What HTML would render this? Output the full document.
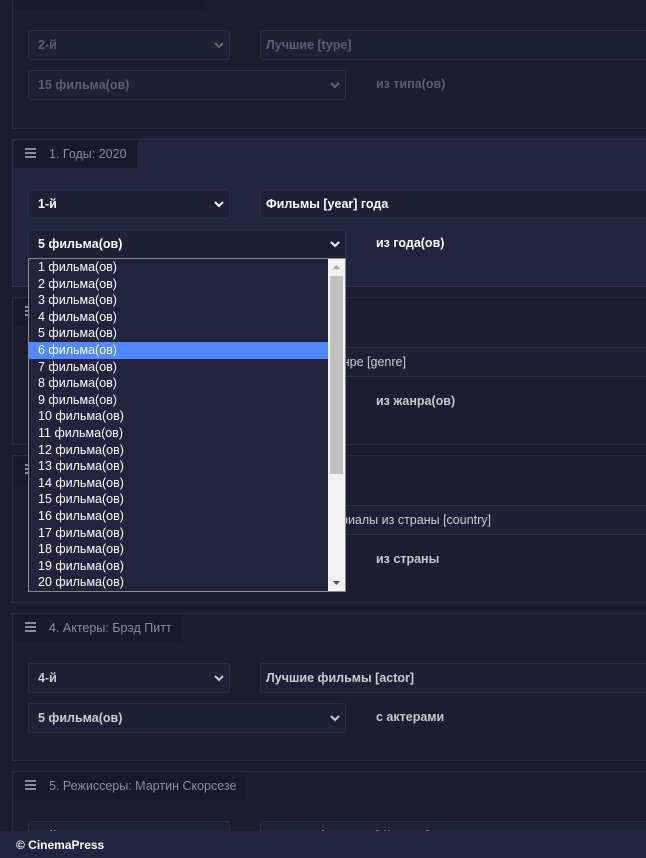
<!DOCTYPE html>
<html><head><meta charset="utf-8"><style>
*{box-sizing:border-box;margin:0;padding:0}
html{overflow:hidden;height:858px}
body{width:646px;height:858px;overflow:hidden;background:#1b1d2e;font-family:"Liberation Sans",Arial,sans-serif;font-size:12.5px;position:relative}
.p{position:absolute;left:12px;width:634px;height:148px;border:1px solid #2a2d42;border-right:none;background:#1c1e30;overflow:hidden}
.p.a{background:#21243c;border-color:#2d3050}
.tab{position:absolute;left:1px;top:1px;height:27px;background:#181a29;color:#8a8c98;padding:0 10px 0 11px;line-height:27px;font-size:12.5px}
.tab b{display:inline-block;width:11px;vertical-align:middle;margin-right:13px;position:relative;top:-2px}
.tab b i{display:block;height:2px;background:#8a8c98;margin:2px 0}
.s{position:absolute;height:30px;border:1px solid #2c2f48;border-radius:3px;background:#1e2036;color:#ccc;font-weight:bold;line-height:28px;padding-left:9px}
.t{padding-left:5px;width:400px!important}
.s svg{position:absolute;right:5px;top:10px}
.l{position:absolute;left:363px;top:96px;color:#c8c8cc;font-weight:bold}
.dim .s,.dim .l{color:#5c5e6c}
.dd{position:absolute;left:28px;top:258px;width:318px;height:334px;background:#21243c;border:1px solid #888;color:#fff;font-size:12.5px}
.dd .it{height:16.6px;line-height:16.6px;padding-left:9px;width:299px}
.dd .sel{background:#4f88ff}
.sb{position:absolute;right:0;top:0;width:17px;height:332px;background:#f1f1f1}
.th{position:absolute;left:2px;top:17px;width:13px;height:198px;background:#c1c1c1}
.ft{position:absolute;left:0;top:831px;width:646px;height:27px;background:#22253f;color:#fff;font-weight:bold;font-size:12px;line-height:28px;padding-left:16px}
</style></head><body>
<div class="p dim" style="top:0;height:129px;border-top:none"><div class="tab" style="top:0;height:10px;width:190px"></div>
<div class="s" style="left:15px;top:30px;width:202px">2-й<svg width="10" height="8"><path d="M1 2l4 4 4-4" stroke="#666" stroke-width="2" fill="none"/></svg></div>
<div class="s t" style="left:247px;top:30px">Лучшие [type]</div>
<div class="s" style="left:15px;top:70px;width:318px">15 фильма(ов)<svg width="10" height="8"><path d="M1 2l4 4 4-4" stroke="#666" stroke-width="2" fill="none"/></svg></div>
<div class="l" style="top:77px">из типа(ов)</div></div>

<div class="p a" style="top:139px"><div class="tab"><b><i></i><i></i><i></i></b>1. Годы: 2020</div>
<div class="s" style="left:15px;top:49px;width:202px;color:#fff">1-й<svg width="10" height="8"><path d="M1 2l4 4 4-4" stroke="#fff" stroke-width="2" fill="none"/></svg></div>
<div class="s t" style="left:247px;top:49px;color:#fff">Фильмы [year] года</div>
<div class="s" style="left:15px;top:89px;width:318px;color:#fff">5 фильма(ов)<svg width="10" height="8"><path d="M1 2l4 4 4-4" stroke="#fff" stroke-width="2" fill="none"/></svg></div>
<div class="l" style="color:#fff">из года(ов)</div></div>

<div class="p" style="top:297px"><div class="tab"><b><i></i><i></i><i></i></b>2. Жанры</div>
<div class="s t" style="left:247px;top:49px;font-weight:normal">Фильмы в жанре [genre]</div>
<div class="l">из жанра(ов)</div></div>

<div class="p" style="top:455px"><div class="tab"><b><i></i><i></i><i></i></b>3. Страны</div>
<div class="s t" style="left:247px;top:49px;font-weight:normal">Фильмы и сериалы из страны [country]</div>
<div class="l">из страны</div></div>

<div class="p" style="top:613px"><div class="tab"><b><i></i><i></i><i></i></b>4. Актеры: Брэд Питт</div>
<div class="s" style="left:15px;top:49px;width:202px">4-й<svg width="10" height="8"><path d="M1 2l4 4 4-4" stroke="#ccc" stroke-width="2" fill="none"/></svg></div>
<div class="s t" style="left:247px;top:49px">Лучшие фильмы [actor]</div>
<div class="s" style="left:15px;top:89px;width:318px">5 фильма(ов)<svg width="10" height="8"><path d="M1 2l4 4 4-4" stroke="#ccc" stroke-width="2" fill="none"/></svg></div>
<div class="l">с актерами</div></div>

<div class="p" style="top:771px;height:60px;border-bottom:none"><div class="tab"><b><i></i><i></i><i></i></b>5. Режиссеры: Мартин Скорсезе</div>
<div class="s" style="left:15px;top:49px;width:202px">5-й</div>
<div class="s t" style="left:247px;top:49px">Лучшие фильмы [director]</div></div>

<div class="dd">
<div class="it">1 фильма(ов)</div><div class="it">2 фильма(ов)</div><div class="it">3 фильма(ов)</div><div class="it">4 фильма(ов)</div><div class="it">5 фильма(ов)</div><div class="it sel">6 фильма(ов)</div><div class="it">7 фильма(ов)</div><div class="it">8 фильма(ов)</div><div class="it">9 фильма(ов)</div><div class="it">10 фильма(ов)</div><div class="it">11 фильма(ов)</div><div class="it">12 фильма(ов)</div><div class="it">13 фильма(ов)</div><div class="it">14 фильма(ов)</div><div class="it">15 фильма(ов)</div><div class="it">16 фильма(ов)</div><div class="it">17 фильма(ов)</div><div class="it">18 фильма(ов)</div><div class="it">19 фильма(ов)</div><div class="it">20 фильма(ов)</div>
<div class="sb"><svg width="17" height="332" style="position:absolute;left:0;top:0"><path d="M5 10l3.5-4 3.5 4z" fill="#a3a3a3"/><path d="M5 322l3.5 4 3.5-4z" fill="#505050"/></svg><div class="th"></div></div>
</div>
<div class="ft">© CinemaPress</div>
</body></html>
